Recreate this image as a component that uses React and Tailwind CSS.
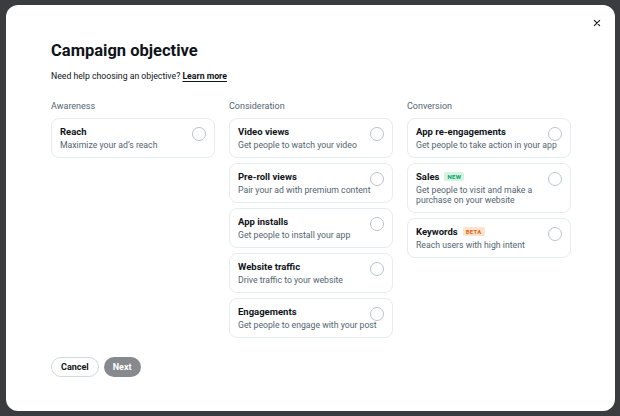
import React, { useState } from 'react';

const COLUMNS = [
  {
    label: 'Awareness',
    items: [{ id: 'reach', title: 'Reach', desc: 'Maximize your ad’s reach' }],
  },
  {
    label: 'Consideration',
    items: [
      { id: 'video', title: 'Video views', desc: 'Get people to watch your video' },
      { id: 'preroll', title: 'Pre-roll views', desc: 'Pair your ad with premium content' },
      { id: 'installs', title: 'App installs', desc: 'Get people to install your app' },
      { id: 'traffic', title: 'Website traffic', desc: 'Drive traffic to your website' },
      { id: 'engagements', title: 'Engagements', desc: 'Get people to engage with your post' },
    ],
  },
  {
    label: 'Conversion',
    items: [
      { id: 'reengage', title: 'App re-engagements', desc: 'Get people to take action in your app' },
      { id: 'sales', title: 'Sales', badge: 'new', desc: 'Get people to visit and make a purchase on your website' },
      { id: 'keywords', title: 'Keywords', badge: 'beta', desc: 'Reach users with high intent' },
    ],
  },
];

function Badge({ kind }) {
  const tone = kind === 'new' ? 'bg-[#d4f3e1] text-[#00a36b]' : 'bg-[#fde2cc] text-[#e0651a]';
  return (
    <span className={`ml-[5px] rounded-[2px] px-[3px] text-[6px] font-bold uppercase leading-[9px] tracking-[0.3px] ${tone}`}>
      {kind === 'new' ? 'New' : 'Beta'}
    </span>
  );
}

function ObjectiveCard({ item, selected, onSelect }) {
  return (
    <button
      onClick={() => onSelect(item.id)}
      className="relative block w-full rounded-[8px] border border-[#e6ecef] bg-white px-[8px] pt-[6px] pb-[7px] text-left"
    >
      <div className="flex items-center pr-[20px] text-[9.5px] font-bold leading-[13px] text-[#0f1419]">
        {item.title}
        {item.badge && <Badge kind={item.badge} />}
      </div>
      <p className="mt-[2px] text-[8.7px] leading-[10px] text-[#536471]">{item.desc}</p>
      <span
        className={`absolute right-[8px] top-[8px] h-[14px] w-[14px] rounded-full border ${selected ? 'border-[4px] border-[#1d9bf0]' : 'border-[#b9c5cc]'}`}
      />
    </button>
  );
}

export default function App() {
  const [selected, setSelected] = useState(null);

  return (
    <div
      className="h-[416px] w-[620px] overflow-hidden bg-[#3a3c3f] pl-[6px] pt-[5px]"
      style={{ fontFamily: 'Roboto, "Noto Sans", sans-serif' }}
    >
      <div className="relative h-[406px] w-[609px] rounded-[12px] bg-white pl-[45px] pr-[44px] pt-[35px]">
        <button className="absolute right-[8px] top-[8px] flex h-[20px] w-[20px] items-center justify-center text-[#0f1419]" aria-label="Close">
          <svg viewBox="0 0 24 24" className="h-[8px] w-[8px]" fill="none" stroke="currentColor" strokeWidth="3.2" strokeLinecap="round">
            <path d="M4 4l16 16M20 4L4 20" />
          </svg>
        </button>

        <h1 className="text-[16.5px] font-bold leading-[22px] text-[#0f1419]">Campaign objective</h1>
        <p className="mt-[8px] text-[8.7px] leading-[12px] text-[#0f1419]">
          Need help choosing an objective?{' '}
          <a href="#" className="font-bold underline decoration-[#0f1419] underline-offset-2">Learn more</a>
        </p>

        <div className="mt-[18px] grid grid-cols-3 gap-x-[14px]">
          {COLUMNS.map((col) => (
            <div key={col.label}>
              <p className="mb-[6px] text-[9px] leading-[12px] text-[#536471]">{col.label}</p>
              <div className="flex flex-col gap-[5px]">
                {col.items.map((item) => (
                  <ObjectiveCard key={item.id} item={item} selected={selected === item.id} onSelect={setSelected} />
                ))}
              </div>
            </div>
          ))}
        </div>

        <div className="mt-[19px] flex gap-[5px]">
          <button className="h-[20px] rounded-full border border-[#cfd9de] px-[9px] text-[9px] font-bold leading-none text-[#0f1419]">Cancel</button>
          <button className="h-[20px] rounded-full bg-[#878a8c] px-[9px] text-[9px] font-bold leading-none text-white">Next</button>
        </div>
      </div>
    </div>
  );
}
